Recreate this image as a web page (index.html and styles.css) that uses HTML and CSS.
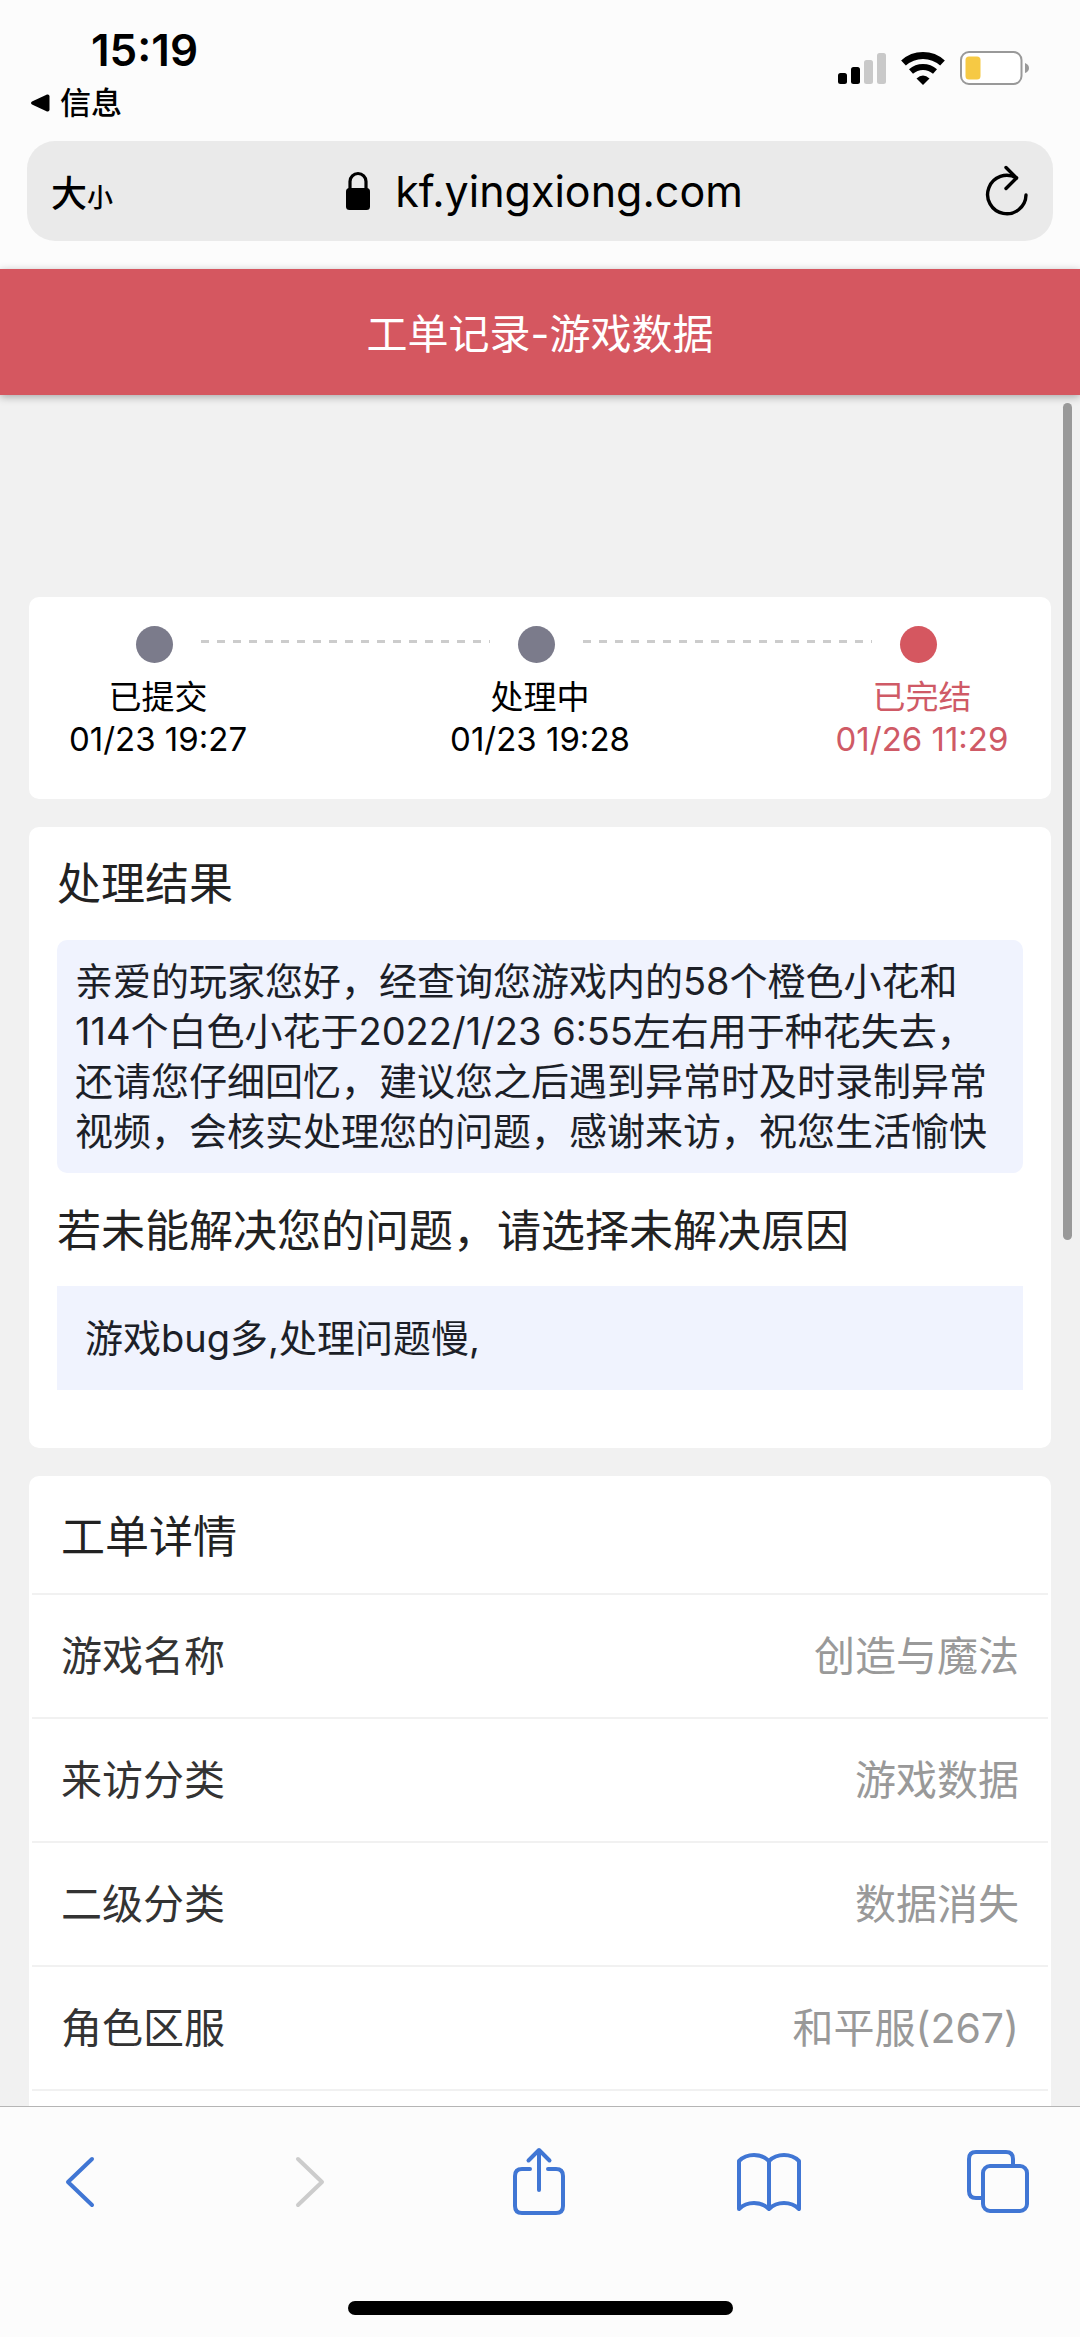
FILE: index.html
```html
<!DOCTYPE html>
<html lang="zh-CN">
<head>
<meta charset="utf-8">
<meta name="viewport" content="width=device-width, initial-scale=1">
<title>工单记录-游戏数据</title>
<link rel="stylesheet" href="styles.css">
</head>
<body>
<header class="browser-top">
  <div class="status">
    <div class="status-left">
      <time class="clock">15:19</time>
      <a class="back-app" href="#">
        <svg width="20" height="20" viewBox="0 0 20 20" aria-hidden="true"><path d="M17 1.500L2 8.500Q0 10 2 11.500L17 18.500Q19.500 19 19.500 16.500V3.500Q19.500 1 17 1.500Z"/></svg>
        信息
      </a>
    </div>
    <div class="status-right" aria-hidden="true">
      <svg width="48" height="34" viewBox="0 0 48 34">
        <rect x="0" y="22" width="9" height="11" rx="2.500"/>
        <rect x="13" y="16" width="9" height="17" rx="2.500"/>
        <rect x="26" y="9" width="9" height="24" rx="2.500" fill="#c9c9c9"/>
        <rect x="39" y="2" width="9" height="31" rx="2.500" fill="#c9c9c9"/>
      </svg>
      <svg width="46" height="34" viewBox="0 0 46 34">
        <path d="M3.500 12A29 29 0 0 1 42.500 12" fill="none" stroke="#000" stroke-width="7"/>
        <path d="M11 20.500A18 18 0 0 1 35 20.500" fill="none" stroke="#000" stroke-width="6"/>
        <path d="M23 34L16.500 27.500Q23 21.500 29.500 27.500Z"/>
      </svg>
      <svg width="70" height="34" viewBox="0 0 70 34">
        <rect x="1" y="1" width="60.500" height="32" rx="8" fill="#fff" stroke="#999" stroke-width="2"/>
        <rect x="5.500" y="5.500" width="15" height="23" rx="3.500" fill="#f6c944"/>
        <path d="M65 12q4 1.500 4 5t-4 5z" fill="#999"/>
      </svg>
    </div>
  </div>
  <div class="address">
    <button class="text-size" type="button" aria-label="文字大小"><span class="size-big">大</span><span class="size-small">小</span></button>
    <div class="url">
      <svg width="26" height="40" viewBox="0 0 26 40" aria-hidden="true"><rect x="1" y="17" width="24" height="22" rx="3.500"/><path d="M5 19V10.500a8 8 0 0 1 16 0V19" fill="none" stroke="#000" stroke-width="3.200"/></svg>
      <span>kf.yingxiong.com</span>
    </div>
    <button class="reload" type="button" aria-label="重新加载">
      <svg width="44" height="54" viewBox="0 0 44 54" fill="none" stroke="#000" stroke-width="3.400" stroke-linecap="round" stroke-linejoin="round"><path d="M41 31A19.200 19.200 0 1 1 31.500 14"/><path d="M21 3.500L31.500 14L21 24.500"/></svg>
    </button>
  </div>
</header>

<div class="page">
  <h1 class="page-title">工单记录-游戏数据</h1>
  <main class="content">
    <section class="card progress">
      <ol class="steps">
        <li class="step"><span class="dot"></span><span class="step-name">已提交</span><span>01/23 19:27</span></li>
        <li class="dash" role="presentation"></li>
        <li class="step"><span class="dot"></span><span class="step-name">处理中</span><span>01/23 19:28</span></li>
        <li class="dash" role="presentation"></li>
        <li class="step step-done"><span class="dot"></span><span class="step-name">已完结</span><span>01/26 11:29</span></li>
      </ol>
    </section>

    <section class="card result">
      <h2>处理结果</h2>
      <p class="reply">亲爱的玩家您好，经查询您游戏内的58个橙色小花和<br>114个白色小花于2022/1/23 6:55左右用于种花失去，<br>还请您仔细回忆，建议您之后遇到异常时及时录制异常<br>视频，会核实处理您的问题，感谢来访，祝您生活愉快</p>
      <h2>若未能解决您的问题，请选择未解决原因</h2>
      <p class="reason">游戏bug多,处理问题慢,</p>
    </section>

    <section class="card detail">
      <h2>工单详情</h2>
      <dl class="rows">
        <div class="row"><dt>游戏名称</dt><dd>创造与魔法</dd></div>
        <div class="row"><dt>来访分类</dt><dd>游戏数据</dd></div>
        <div class="row"><dt>二级分类</dt><dd>数据消失</dd></div>
        <div class="row"><dt>角色区服</dt><dd>和平服(267)</dd></div>
        <div class="row"></div>
      </dl>
    </section>
  </main>
  <div class="scroll-thumb"></div>
</div>

<footer class="browser-bottom">
  <nav class="toolbar">
    <button type="button" aria-label="后退"><svg width="30" height="52" viewBox="0 0 30 52"><path d="M27 3L3 26L27 49"/></svg></button>
    <button type="button" aria-label="前进" disabled><svg width="30" height="52" viewBox="0 0 30 52"><path d="M3 3L27 26L3 49"/></svg></button>
    <button type="button" aria-label="共享"><svg width="52" height="70" viewBox="0 0 52 70"><path d="M17 22H9Q2 22 2 29V59Q2 66 9 66H43Q50 66 50 59V29Q50 22 43 22H35M26 43V4M15.500 13.500L26 3L36.500 13.500"/></svg></button>
    <button type="button" aria-label="书签"><svg width="66" height="60" viewBox="0 0 66 60"><path d="M33 9Q27 3 18 3T3 9V57Q9 51 18 51T33 57Q39 51 48 51T63 57V9Q57 3 48 3T33 9V57"/></svg></button>
    <button type="button" aria-label="标签页"><svg width="62" height="64" viewBox="0 0 62 64"><path d="M15 48H9Q2 48 2 41V9Q2 2 9 2H39Q46 2 46 9V16"/><rect x="16" y="16" width="44" height="45" rx="7"/></svg></button>
  </nav>
  <div class="home-bar"></div>
</footer>
</body>
</html>
```
FILE: styles.css
```css
* {
  box-sizing: border-box;
}

body {
  margin: 0;
  height: 100vh;
  display: flex;
  flex-direction: column;
  overflow: hidden;
  background: #f1f1f1;
  color: #000;
  font-family: Inter, "Noto Sans CJK SC", sans-serif;
}

h1, h2, p, dl, dd, ol {
  margin: 0;
  padding: 0;
  font-weight: 400;
}

button {
  display: flex;
  align-items: center;
  padding: 0;
  border: 0;
  background: none;
  color: inherit;
  font: inherit;
}

svg {
  display: block;
  flex: none;
}

/* Browser chrome, top */
.browser-top {
  flex: none;
  padding-bottom: 28px;
  background: #fcfcfc;
}

.status {
  display: flex;
  justify-content: space-between;
  height: 141px;
  padding: 24px 50px 0 30px;
}

.clock {
  display: block;
  padding-left: 61px;
  font-size: 44px;
  font-weight: 600;
  line-height: 52px;
}

.back-app {
  display: flex;
  align-items: center;
  gap: 10px;
  color: #000;
  font-size: 31px;
  font-weight: 500;
  line-height: 54px;
  text-decoration: none;
}

.status-right {
  display: flex;
  gap: 14px;
  padding-top: 27px;
}

.address {
  display: grid;
  grid-template-columns: 1fr auto 1fr;
  align-items: center;
  height: 100px;
  margin: 0 27px;
  padding: 0 24px;
  border-radius: 28px;
  background: #eaeaea;
}

.text-size {
  align-items: baseline;
  font-weight: 500;
}

.size-big {
  font-size: 36px;
}

.size-small {
  font-size: 26px;
}

.url {
  display: flex;
  align-items: center;
  gap: 24px;
  padding-left: 8px;
  font-size: 43px;
}

.reload {
  justify-self: end;
}

/* Web page */
.page {
  position: relative;
  flex: 1;
  min-height: 0;
  display: flex;
  flex-direction: column;
}

.page-title {
  flex: none;
  padding: 35px 0 31px;
  background: #d55760;
  box-shadow: 0 2px 8px rgba(0, 0, 0, 0.3);
  color: #fff;
  font-size: 41px;
  line-height: 60px;
  text-align: center;
}

.content {
  flex: 1;
  min-height: 0;
  display: flex;
  flex-direction: column;
  gap: 28px;
  padding: 202px 29px 0;
  overflow: hidden;
}

.card {
  flex: none;
  border-radius: 10px;
  background: #fff;
}

.card h2 {
  color: #222;
  font-size: 44px;
  line-height: 60px;
}

.progress {
  padding: 29px 0 39px;
}

.steps {
  display: flex;
  justify-content: space-between;
  padding: 0 34px;
  list-style: none;
  font-size: 33px;
  line-height: 42px;
}

.step {
  flex: none;
  display: flex;
  flex-direction: column;
  align-items: center;
  width: 190px;
}

.dot {
  width: 37px;
  height: 37px;
  margin: 0 8px 13px 0;
  border-radius: 50%;
  background: #7b7b8b;
}

.step-done {
  color: #cf5a66;
}

.step-done .dot {
  background: #d55760;
}

.dash {
  flex: 1;
  height: 3px;
  margin: 14px -45px 0 -52px;
  background: repeating-linear-gradient(90deg, #ccc 0 8px, transparent 8px 16px);
}

.result {
  padding: 27px 28px 58px;
}

.reply,
.reason {
  background: #f0f3fe;
  color: #1c1f28;
  font-size: 38px;
  line-height: 50px;
}

.reply {
  margin: 26px 0 28px;
  padding: 16px 18px 17px;
  border-radius: 10px;
}

.reason {
  margin-top: 25px;
  padding: 27px 28px;
}

.detail {
  padding: 0 3px;
}

.detail h2 {
  padding: 31px 29px 26px;
}

.row {
  display: flex;
  justify-content: space-between;
  height: 124px;
  padding: 31px 29px;
  border-top: 2px solid #f1f1f1;
  color: #333;
  font-size: 41px;
  line-height: 60px;
}

.row dd {
  color: #999;
}

.scroll-thumb {
  position: absolute;
  top: 134px;
  right: 8px;
  width: 9px;
  height: 837px;
  border-radius: 5px;
  background: #999;
}

/* Browser chrome, bottom */
.browser-bottom {
  flex: none;
  padding-bottom: 22px;
  border-top: 1px solid #b5b5b5;
  background: #fcfcfc;
}

.toolbar {
  display: flex;
  align-items: center;
  justify-content: space-between;
  height: 150px;
  padding: 0 49px 0 47px;
}

.toolbar button {
  justify-content: center;
  width: 66px;
}

.toolbar svg {
  fill: none;
  stroke: #4076d4;
  stroke-width: 4;
  stroke-linecap: round;
  stroke-linejoin: round;
}

.toolbar button:disabled svg {
  stroke: #ccc;
}

.home-bar {
  width: 385px;
  height: 14px;
  margin: 44px auto 0;
  border-radius: 7px;
  background: #000;
}
```
